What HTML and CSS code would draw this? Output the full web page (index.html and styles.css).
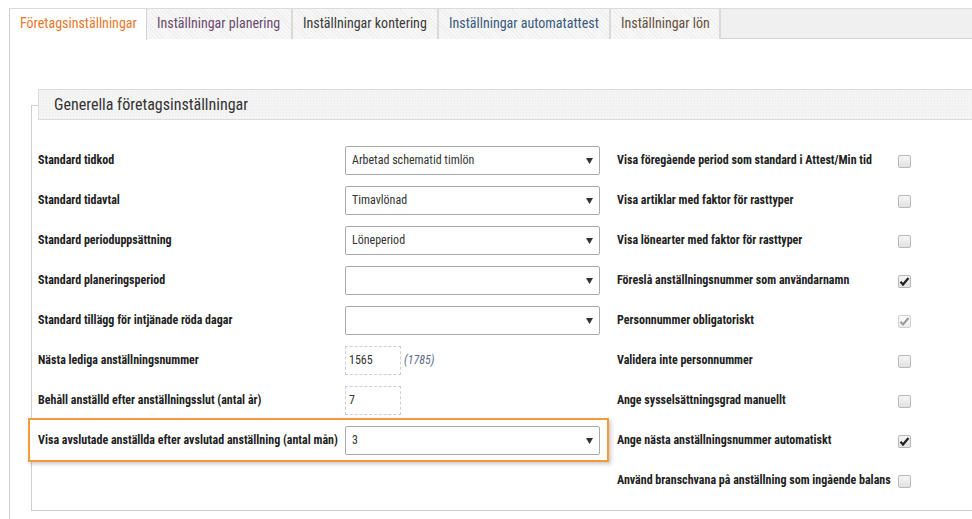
FILE: index.html
```html
<!DOCTYPE html>
<html lang="sv">
<head>
<meta charset="utf-8">
<link rel="stylesheet" href="styles.css">
</head>
<body>
<div class="page">
  <div class="tabbar">
    <div class="tab active">Företagsinställningar</div>
    <div class="tab c-purple">Inställningar planering</div>
    <div class="tab c-dark">Inställningar kontering</div>
    <div class="tab c-blue">Inställningar automatattest</div>
    <div class="tab c-brown">Inställningar lön</div>
  </div>
  <div class="panel">
    <div class="fieldset">
      <div class="legend">Generella företagsinställningar</div>
      <div class="grid">
        <div class="lrow"><span class="label">Standard tidkod</span><div class="select"><span>Arbetad schematid timlön</span><svg class="arrow" width="7" height="6" viewBox="0 0 7 6"><path d="M0 0H7L3.5 6Z" fill="#333"/></svg></div></div>
        <div class="rrow"><span class="label">Visa föregående period som standard i Attest/Min tid</span><span class="cb"></span></div>

        <div class="lrow"><span class="label">Standard tidavtal</span><div class="select"><span>Timavlönad</span><svg class="arrow" width="7" height="6" viewBox="0 0 7 6"><path d="M0 0H7L3.5 6Z" fill="#333"/></svg></div></div>
        <div class="rrow"><span class="label">Visa artiklar med faktor för rasttyper</span><span class="cb"></span></div>

        <div class="lrow"><span class="label">Standard perioduppsättning</span><div class="select"><span>Löneperiod</span><svg class="arrow" width="7" height="6" viewBox="0 0 7 6"><path d="M0 0H7L3.5 6Z" fill="#333"/></svg></div></div>
        <div class="rrow"><span class="label">Visa lönearter med faktor för rasttyper</span><span class="cb"></span></div>

        <div class="lrow"><span class="label">Standard planeringsperiod</span><div class="select"><span></span><svg class="arrow" width="7" height="6" viewBox="0 0 7 6"><path d="M0 0H7L3.5 6Z" fill="#333"/></svg></div></div>
        <div class="rrow"><span class="label">Föreslå anställningsnummer som användarnamn</span><span class="cb"><svg width="11" height="11" viewBox="0 0 11 11"><path d="M1.5 5.8L4 8.5L9.5 2" fill="none" stroke="#222" stroke-width="2.2"/></svg></span></div>

        <div class="lrow"><span class="label">Standard tillägg för intjänade röda dagar</span><div class="select"><span></span><svg class="arrow" width="7" height="6" viewBox="0 0 7 6"><path d="M0 0H7L3.5 6Z" fill="#333"/></svg></div></div>
        <div class="rrow"><span class="label">Personnummer obligatoriskt</span><span class="cb disabled"><svg width="11" height="11" viewBox="0 0 11 11"><path d="M1.5 5.8L4 8.5L9.5 2" fill="none" stroke="#9a9a9a" stroke-width="2"/></svg></span></div>

        <div class="lrow"><span class="label">Nästa lediga anställningsnummer</span><div class="inputwrap"><div class="input">1565</div><span class="hint">(1785)</span></div></div>
        <div class="rrow"><span class="label">Validera inte personnummer</span><span class="cb"></span></div>

        <div class="lrow"><span class="label">Behåll anställd efter anställningsslut (antal år)</span><div class="inputwrap"><div class="input">7</div></div></div>
        <div class="rrow"><span class="label">Ange sysselsättningsgrad manuellt</span><span class="cb"></span></div>

        <div class="lrow highlight"><span class="label">Visa avslutade anställda efter avslutad anställning (antal mån)</span><div class="select"><span>3</span><svg class="arrow" width="7" height="6" viewBox="0 0 7 6"><path d="M0 0H7L3.5 6Z" fill="#333"/></svg></div></div>
        <div class="rrow"><span class="label">Ange nästa anställningsnummer automatiskt</span><span class="cb"><svg width="11" height="11" viewBox="0 0 11 11"><path d="M1.5 5.8L4 8.5L9.5 2" fill="none" stroke="#222" stroke-width="2.2"/></svg></span></div>

        <div class="lrow empty"></div>
        <div class="rrow"><span class="label">Använd branschvana på anställning som ingående balans</span><span class="cb"></span></div>
      </div>
    </div>
  </div>
</div>
</body>
</html>
```
FILE: styles.css
```css
* { box-sizing: border-box; }
html, body { margin: 0; padding: 0; background: #fff; }
body {
  font-family: "Roboto Condensed", "Roboto", "Liberation Sans", sans-serif;
  color: #222;
  width: 972px;
  height: 519px;
  overflow: hidden;
}
.page {
  padding: 8px 0 0 9px;
}
.tabbar {
  display: flex;
  height: 31px;
  background: #f1f0f1;
  border-top: 1px solid #dcdcdc;
  border-bottom: 1px solid #d2d2d2;
  margin-right: -20px;
}
.tab {
  height: 30px;
  line-height: 28px;
  font-size: 14px;
  padding: 0 11px 0 10px;
  border-right: 2px solid #dadada;
  background-color: #f7f7f7;
  background-image: repeating-linear-gradient(45deg, rgba(0,0,0,0.035) 0 1px, transparent 1px 3px);
  white-space: nowrap;
}
.tab.active {
  background: #fff;
  color: #e8772b;
  border-left: 1px solid #d2d2d2;
  border-right: 1px solid #d2d2d2;
  height: 31px;
  margin-bottom: -1px;
  width: 138px;
}
.c-purple { color: #6a4a6e; width: 146px; }
.c-dark { color: #3a3a3a; width: 146px; }
.c-blue { color: #3a5a7e; width: 172px; }
.c-brown { color: #66503a; width: 110px; }

.panel {
  border-left: 1px solid #d2d2d2;
  height: 490px;
  padding: 66px 0 0 21px;
}
.fieldset {
  border: 1px solid #cfcfcf;
  border-right: none;
  height: 406px;
  padding: 0 0 0 6px;
}
.legend {
  margin: -17px 0 0 0;
  height: 31px;
  border: 1px solid #dcdcdc;
  border-right: none;
  background-color: #f4f4f4;
  background-image: radial-gradient(rgba(0,0,0,0.04) 0.6px, transparent 0.8px);
  background-size: 3px 3px;
  font-size: 16px;
  line-height: 29px;
  padding-left: 15px;
  color: #333;
}
.grid {
  display: grid;
  grid-template-columns: 562px 294px;
  column-gap: 17px;
  margin-top: 20px;
}
.lrow, .rrow {
  height: 40px;
  display: flex;
  align-items: center;
}
.label {
  font-weight: 700;
  font-size: 12px;
  color: #222;
  white-space: nowrap;
}
.lrow .label { width: 307px; flex: none; }
.rrow .label { width: 281px; flex: none; }
.select {
  width: 255px;
  height: 29px;
  border: 1px solid #a9a9a9;
  border-radius: 2px;
  display: flex;
  align-items: center;
  justify-content: space-between;
  padding: 0 6px 0 6px;
  font-size: 12px;
  color: #333;
  background: #fff;
}
.arrow { flex: none; margin-top: 1px; }
.inputwrap { display: flex; align-items: center; gap: 3px; }
.input {
  width: 56px;
  height: 29px;
  border: 1px dashed #cfcfcf;
  font-size: 12px;
  color: #333;
  line-height: 27px;
  padding-left: 3px;
}
.hint {
  font-style: italic;
  font-size: 12px;
  color: #5f6f8a;
}
.highlight {
  margin: -2px -9px -2px -10px;
  padding: 0 7px 0 8px;
  height: 44px;
  border: 2px solid #f39a3b;
  box-shadow: 2px 2px 4px rgba(0,0,0,0.22);
  background: #fff;
}
.highlight .label { width: 307px; }
.cb {
  width: 13px;
  height: 13px;
  border: 1px solid #b8b8b8;
  border-radius: 2px;
  background: linear-gradient(#f6f6f6, #e2e2e2);
  display: flex;
  align-items: center;
  justify-content: center;
  margin-top: 3px;
}
.cb.disabled { border-color: #d0d0d0; background: linear-gradient(#fafafa, #ececec); }
```
